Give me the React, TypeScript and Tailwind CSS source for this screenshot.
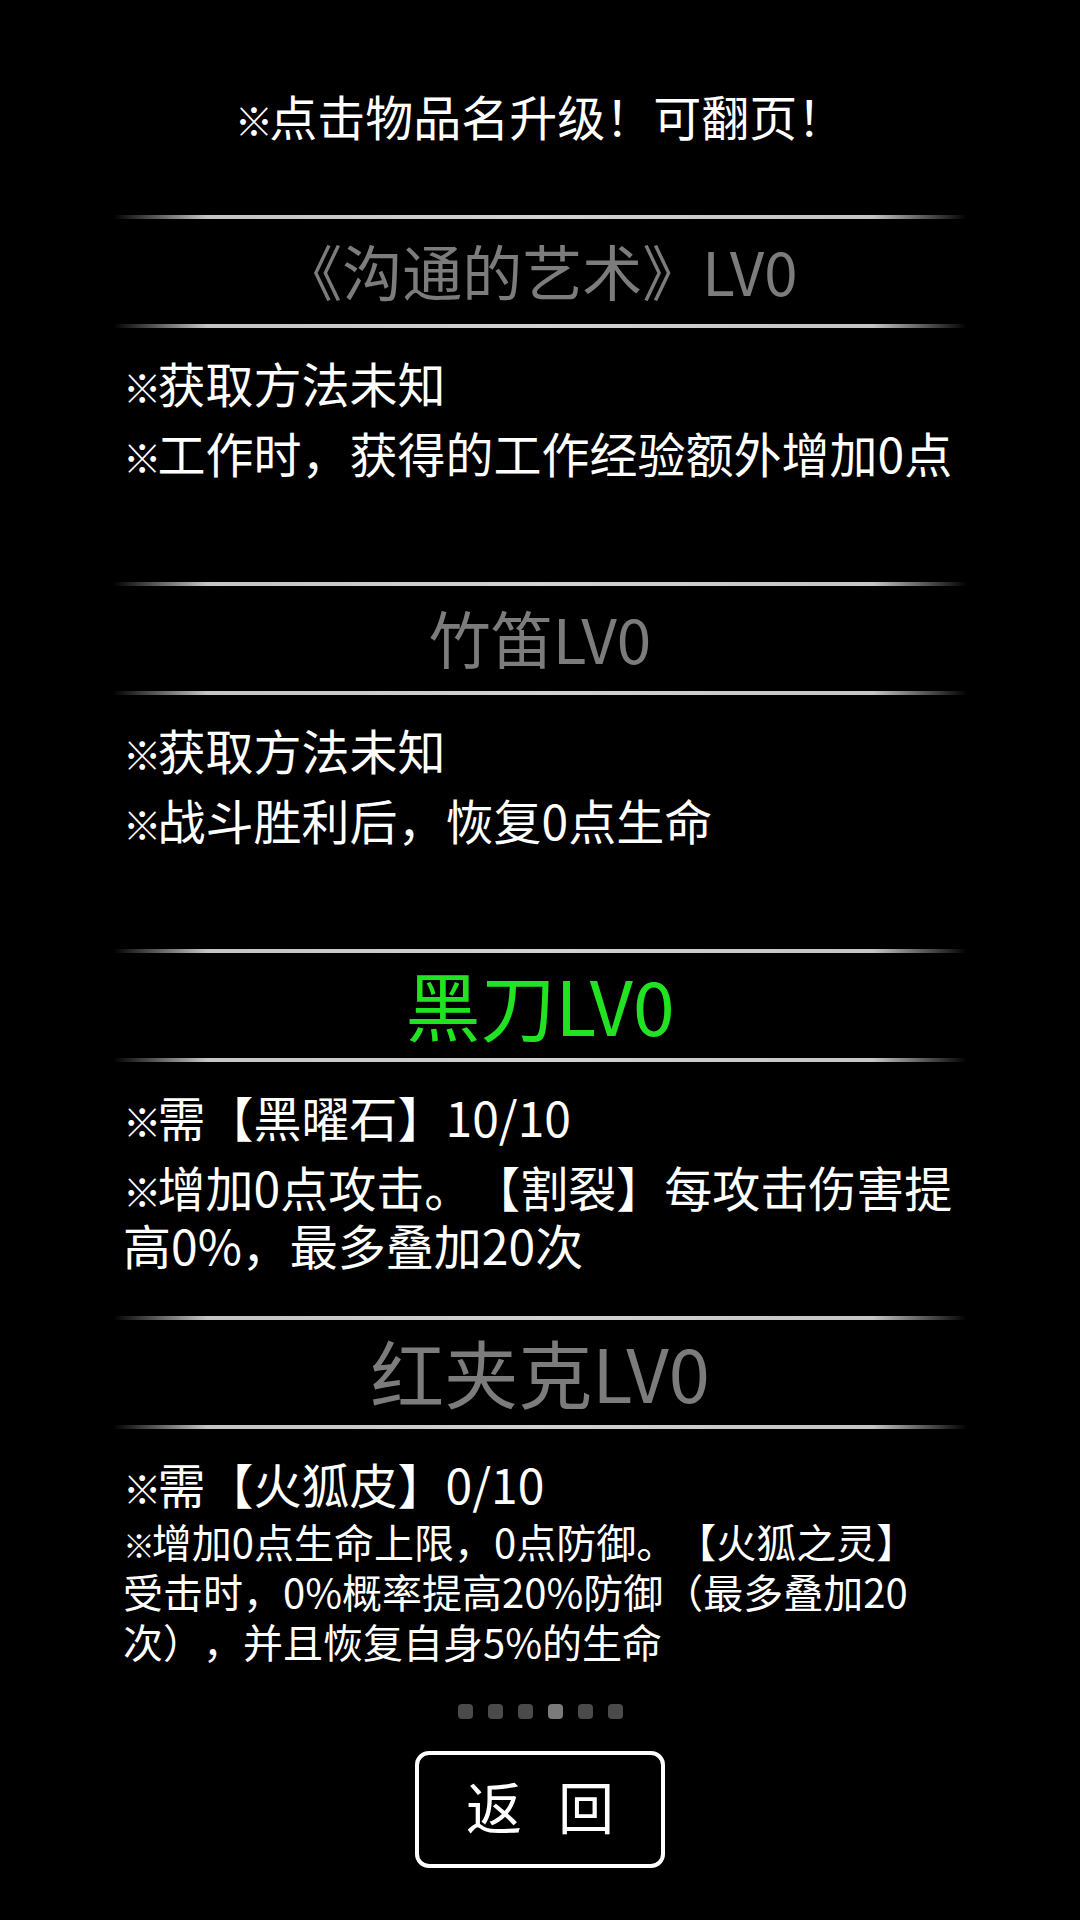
import React from "react";

type Line = { text: string; small?: boolean; gap?: boolean };

type Item = {
  name: string;
  size: string;
  color: string;
  lines: Line[];
};

const items: Item[] = [
  {
    name: "《沟通的艺术》LV0",
    size: "text-[60px]",
    color: "text-[#7c7c7c]",
    lines: [
      { text: "※获取方法未知" },
      { text: "※工作时，获得的工作经验额外增加0点", gap: true },
    ],
  },
  {
    name: "竹笛LV0",
    size: "text-[62px]",
    color: "text-[#7c7c7c]",
    lines: [
      { text: "※获取方法未知" },
      { text: "※战斗胜利后，恢复0点生命", gap: true },
    ],
  },
  {
    name: "黑刀LV0",
    size: "text-[75px]",
    color: "text-[#22e322]",
    lines: [
      { text: "※需【黑曜石】10/10" },
      { text: "※增加0点攻击。【割裂】每攻击伤害提", gap: true },
      { text: "高0%，最多叠加20次" },
    ],
  },
  {
    name: "红夹克LV0",
    size: "text-[74px]",
    color: "text-[#7c7c7c]",
    lines: [
      { text: "※需【火狐皮】0/10" },
      { text: "※增加0点生命上限，0点防御。【火狐之灵】", small: true },
      { text: "受击时，0%概率提高20%防御（最多叠加20", small: true },
      { text: "次），并且恢复自身5%的生命", small: true },
    ],
  },
];

// the reference mark is smaller than a full CJK cell
function Mark({ text }: { text: string }) {
  if (!text.startsWith("※")) return <>{text}</>;
  return (
    <>
      <span className="text-[0.8em] leading-none mr-[-0.1em]">※</span>
      {text.slice(1)}
    </>
  );
}

function Divider() {
  return (
    <div className="h-[4px] w-full bg-[linear-gradient(to_right,transparent,#c4c4c4_11%,#d2d2d2_50%,#c4c4c4_89%,transparent)]" />
  );
}

function Section({ item, last }: { item: Item; last: boolean }) {
  return (
    <div className={`flex flex-col w-[854px] ${last ? "" : "h-[367px]"}`}>
      <Divider />
      <div
        className={`h-[105px] pb-[4px] flex items-center justify-center whitespace-nowrap leading-none ${item.size} ${item.color}`}
      >
        {item.name}
      </div>
      <Divider />
      <div className="flex flex-col pt-[25px] px-[10px] text-white">
        {item.lines.map((line, i) =>
          line.small ? (
            <div
              key={i}
              className={`h-[50px] text-[40px] leading-[50px] whitespace-nowrap ${i === 1 ? "mt-[4px]" : ""}`}
            >
              <Mark text={line.text} />
            </div>
          ) : (
            <div
              key={i}
              className={`h-[58px] text-[48px] leading-[58px] whitespace-nowrap ${line.gap ? "mt-[12px]" : ""}`}
            >
              <Mark text={line.text} />
            </div>
          )
        )}
      </div>
    </div>
  );
}

export default function App() {
  const pages = 6;
  const current = 3;

  return (
    <div
      className="w-[1080px] h-[1920px] bg-black flex flex-col items-center overflow-hidden [text-spacing-trim:space-all]"
      style={{ fontFamily: '"Noto Sans CJK SC", "Noto Sans", sans-serif' }}
    >
      <div className="mt-[85px] h-[60px] leading-[60px] text-[48px] text-white whitespace-nowrap">
        <Mark text="※点击物品名升级！可翻页！" />
      </div>

      <div className="mt-[70px] flex flex-col">
        {items.map((item, i) => (
          <Section key={i} item={item} last={i === items.length - 1} />
        ))}
      </div>

      {/* page dots */}
      <div className="mt-[38px] flex gap-[15px]">
        {Array.from({ length: pages }).map((_, i) => (
          <div
            key={i}
            className={`w-[15px] h-[15px] rounded-[4px] ${
              i === current ? "bg-[#7a7a7a]" : "bg-[#4a4a4a]"
            }`}
          />
        ))}
      </div>

      <button className="mt-[32px] w-[250px] h-[117px] pb-[10px] border-[4px] border-white rounded-[14px] flex items-center justify-center gap-[36px] text-white text-[56px] leading-none">
        <span>返</span>
        <span>回</span>
      </button>
    </div>
  );
}
